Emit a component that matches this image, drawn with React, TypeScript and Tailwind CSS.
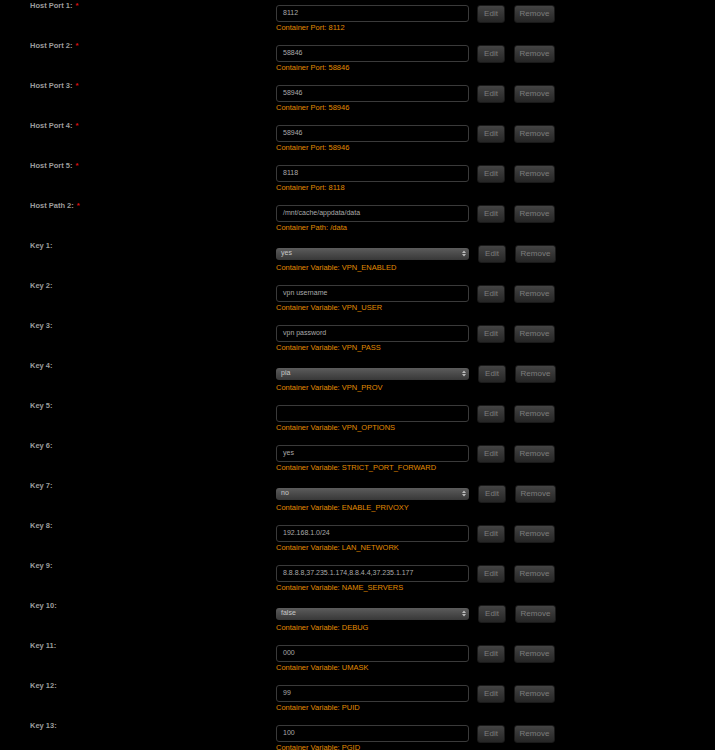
import React from 'react';

type Field = {
  label: string;
  required?: boolean;
  kind: 'text' | 'select';
  value: string;
  note: string;
};

const FIELDS: Field[] = [
  { label: 'Host Port 1:', required: true, kind: 'text', value: '8112', note: 'Container Port: 8112' },
  { label: 'Host Port 2:', required: true, kind: 'text', value: '58846', note: 'Container Port: 58846' },
  { label: 'Host Port 3:', required: true, kind: 'text', value: '58946', note: 'Container Port: 58946' },
  { label: 'Host Port 4:', required: true, kind: 'text', value: '58946', note: 'Container Port: 58946' },
  { label: 'Host Port 5:', required: true, kind: 'text', value: '8118', note: 'Container Port: 8118' },
  { label: 'Host Path 2:', required: true, kind: 'text', value: '/mnt/cache/appdata/data', note: 'Container Path: /data' },
  { label: 'Key 1:', kind: 'select', value: 'yes', note: 'Container Variable: VPN_ENABLED' },
  { label: 'Key 2:', kind: 'text', value: 'vpn username', note: 'Container Variable: VPN_USER' },
  { label: 'Key 3:', kind: 'text', value: 'vpn password', note: 'Container Variable: VPN_PASS' },
  { label: 'Key 4:', kind: 'select', value: 'pia', note: 'Container Variable: VPN_PROV' },
  { label: 'Key 5:', kind: 'text', value: '', note: 'Container Variable: VPN_OPTIONS' },
  { label: 'Key 6:', kind: 'text', value: 'yes', note: 'Container Variable: STRICT_PORT_FORWARD' },
  { label: 'Key 7:', kind: 'select', value: 'no', note: 'Container Variable: ENABLE_PRIVOXY' },
  { label: 'Key 8:', kind: 'text', value: '192.168.1.0/24', note: 'Container Variable: LAN_NETWORK' },
  { label: 'Key 9:', kind: 'text', value: '8.8.8.8,37.235.1.174,8.8.4.4,37.235.1.177', note: 'Container Variable: NAME_SERVERS' },
  { label: 'Key 10:', kind: 'select', value: 'false', note: 'Container Variable: DEBUG' },
  { label: 'Key 11:', kind: 'text', value: '000', note: 'Container Variable: UMASK' },
  { label: 'Key 12:', kind: 'text', value: '99', note: 'Container Variable: PUID' },
  { label: 'Key 13:', kind: 'text', value: '100', note: 'Container Variable: PGID' },
];

function Btn({ children, w }: { children: React.ReactNode; w: string }) {
  return (
    <div
      className={`${w} h-[18px] flex items-center justify-center rounded-[3px] border border-[#1a1a1a] bg-gradient-to-b from-[#444] to-[#262626] text-[8px] text-[#7c7c7c]`}
    >
      {children}
    </div>
  );
}

function SelectBox({ value }: { value: string }) {
  return (
    <div className="w-[193px] h-[12px] flex items-center justify-between rounded-[3px] bg-gradient-to-b from-[#5c5c5c] to-[#383838] pl-[5px] pr-[3px] text-[7px] text-[#c8c8c8]">
      <span>{value}</span>
      <svg width="4" height="7" viewBox="0 0 4 7">
        <path d="M0 3 L2 0.5 L4 3 Z M0 4 L2 6.5 L4 4 Z" fill="#bbb" />
      </svg>
    </div>
  );
}

function TextBox({ value }: { value: string }) {
  return (
    <div className="w-[193px] h-[17px] flex items-center rounded-[3px] border border-[#3a3a3a] bg-black pl-[6px] text-[7px] text-[#aaaaaa]">
      {value}
    </div>
  );
}

function Row({ field }: { field: Field }) {
  const isSelect = field.kind === 'select';
  return (
    <div className="h-[40px] flex">
      <div className="w-[246px] pt-[1px] text-[7.5px] font-bold text-[#9c9c9c] leading-[10px]">
        {field.label}
        {field.required && <span className="ml-[3px] text-[#e01010]">*</span>}
      </div>
      <div className="flex flex-col">
        <div className={`h-[17px] mt-[5px] flex items-center ${isSelect ? 'gap-[9px]' : 'gap-[8px]'}`}>
          {isSelect ? <SelectBox value={field.value} /> : <TextBox value={field.value} />}
          <div className="flex gap-[9px]">
            <Btn w="w-[28px]">Edit</Btn>
            <Btn w="w-[41px]">Remove</Btn>
          </div>
        </div>
        <div className="mt-[1px] text-[7.5px] leading-[10px] text-[#e08a00]">{field.note}</div>
      </div>
    </div>
  );
}

export default function App() {
  return (
    <div
      className="w-[715px] h-[750px] overflow-hidden bg-black pl-[30px]"
      style={{ fontFamily: '"Liberation Sans", Arial, sans-serif' }}
    >
      {FIELDS.map((f) => (
        <Row key={f.label} field={f} />
      ))}
    </div>
  );
}
